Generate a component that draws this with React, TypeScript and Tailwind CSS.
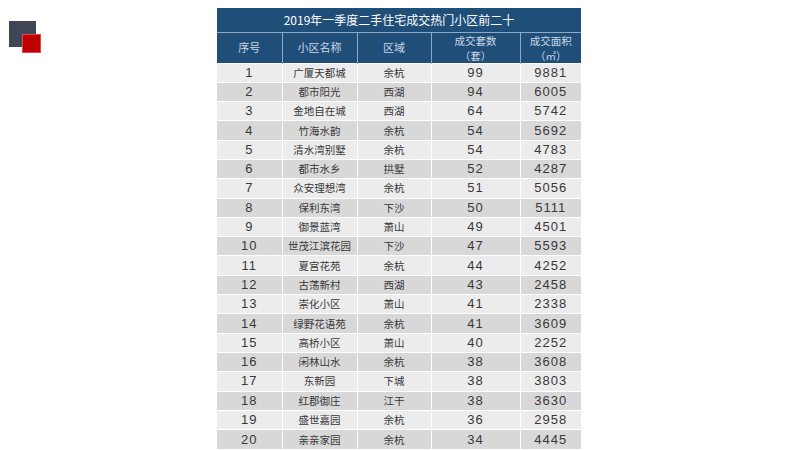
const rows: [string, string, number, number][] = [
  ["广厦天都城", "余杭", 99, 9881],
  ["都市阳光", "西湖", 94, 6005],
  ["金地自在城", "西湖", 64, 5742],
  ["竹海水韵", "余杭", 54, 5692],
  ["清水湾别墅", "余杭", 54, 4783],
  ["都市水乡", "拱墅", 52, 4287],
  ["众安理想湾", "余杭", 51, 5056],
  ["保利东湾", "下沙", 50, 5111],
  ["御景蓝湾", "萧山", 49, 4501],
  ["世茂江滨花园", "下沙", 47, 5593],
  ["夏宫花苑", "余杭", 44, 4252],
  ["古荡新村", "西湖", 43, 2458],
  ["崇化小区", "萧山", 41, 2338],
  ["绿野花语苑", "余杭", 41, 3609],
  ["高桥小区", "萧山", 40, 2252],
  ["闲林山水", "余杭", 38, 3608],
  ["东新园", "下城", 38, 3803],
  ["红郡御庄", "江干", 38, 3630],
  ["盛世嘉园", "余杭", 36, 2958],
  ["亲亲家园", "余杭", 34, 4445],
];

const cjk = "font-['Noto_Sans_CJK_SC',sans-serif]";
const num = "font-['Liberation_Sans','Noto_Sans_CJK_SC',sans-serif] text-[13px] tracking-[1px]";

function TwoLine({ top, bottom }: { top: string; bottom: string }) {
  return (
    <div className="flex flex-col items-center text-[10.5px] leading-[15px]">
      <span>{top}</span>
      <span>{bottom}</span>
    </div>
  );
}

export default function App() {
  return (
    <div className="flex h-[450px] w-[800px] overflow-hidden bg-white">
      {/* slide corner mark */}
      <div className="w-[217px] shrink-0 pl-[9px] pt-[21px]">
        <div className="relative h-[26px] w-[27px] bg-[#414656]">
          <div className="absolute left-[13px] top-[13px] h-[19px] w-[19px] border border-[#e0494b] bg-[#c00000]" />
        </div>
      </div>

      <div className="w-[364px] shrink-0 pt-[8px]">
        <table className={`w-[364px] table-fixed border-collapse whitespace-nowrap text-center ${cjk}`}>
          <colgroup>
            <col className="w-[65px]" />
            <col className="w-[75px]" />
            <col className="w-[74px]" />
            <col className="w-[89px]" />
            <col className="w-[61px]" />
          </colgroup>
          <thead>
            <tr className="h-[24px] bg-[#1f4e79]">
              <th colSpan={5} className="border-b border-[#8fa9c4] p-0 text-[12px] font-normal text-white">
                2019年一季度二手住宅成交热门小区前二十
              </th>
            </tr>
            <tr className="h-[30px] bg-[#1f4e79] text-[11px] text-[#cbd7e6]">
              <th className="border-r border-[#8fa9c4] p-0 font-normal">序号</th>
              <th className="border-r border-[#8fa9c4] p-0 font-normal">小区名称</th>
              <th className="border-r border-[#8fa9c4] p-0 font-normal">区域</th>
              <th className="border-r border-[#8fa9c4] p-0 font-normal">
                <TwoLine top="成交套数" bottom="（套）" />
              </th>
              <th className="p-0 font-normal">
                <TwoLine top="成交面积" bottom="（㎡）" />
              </th>
            </tr>
          </thead>
          <tbody className="text-[10.5px] leading-[18px] text-[#383838]">
            {rows.map(([name, area, sets, size], i) => (
              <tr key={name} className={`h-[19.3px] ${i % 2 === 0 ? "bg-[#ececec]" : "bg-[#d8d8d8]"}`}>
                <td className={`border-r border-t border-white p-0 ${num}`}>{i + 1}</td>
                <td className="border-r border-t border-white p-0">{name}</td>
                <td className="border-r border-t border-white p-0">{area}</td>
                <td className={`border-r border-t border-white p-0 ${num}`}>{sets}</td>
                <td className={`border-t border-white p-0 ${num}`}>{size}</td>
              </tr>
            ))}
          </tbody>
        </table>
      </div>
    </div>
  );
}
